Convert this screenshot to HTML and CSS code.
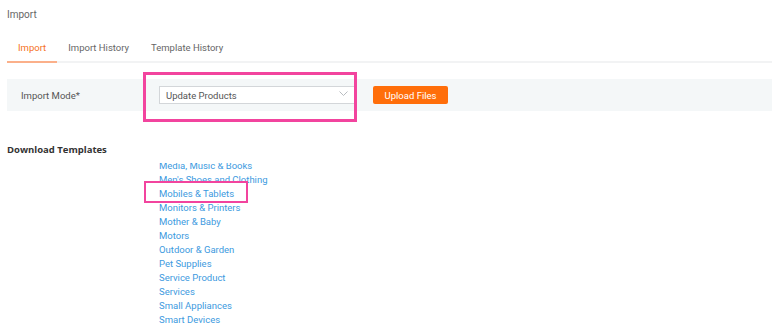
FILE: index.html
```html
<!DOCTYPE html>
<html>
<head>
<meta charset="utf-8">
<link rel="stylesheet" href="styles.css">
</head>
<body>
<div class="page">
  <div class="title">Import</div>
  <div class="tabs">
    <div class="tab active">Import</div>
    <div class="tab">Import History</div>
    <div class="tab">Template History</div>
  </div>
  <div class="mode-row">
    <div class="label">Import Mode*</div>
    <div class="select-wrap">
      <div class="select">
        <span>Update Products</span>
        <svg class="chev" width="9" height="5" viewBox="0 0 9 5"><path d="M0.5 0.5 L4.5 4.5 L8.5 0.5" fill="none" stroke="#b8bcc0" stroke-width="1"/></svg>
      </div>
      <div class="mark mark-select"></div>
    </div>
    <button class="upload">Upload Files</button>
  </div>
  <div class="section-title">Download Templates</div>
  <div class="list-view">
    <ul class="list">
      <li>Media, Music &amp; Books</li>
      <li>Men's Shoes and Clothing</li>
      <li class="marked">Mobiles &amp; Tablets<span class="mark mark-item"></span></li>
      <li>Monitors &amp; Printers</li>
      <li>Mother &amp; Baby</li>
      <li>Motors</li>
      <li>Outdoor &amp; Garden</li>
      <li>Pet Supplies</li>
      <li>Service Product</li>
      <li>Services</li>
      <li>Small Appliances</li>
      <li>Smart Devices</li>
    </ul>
  </div>
</div>
</body>
</html>
```
FILE: styles.css
```css
html, body {
  margin: 0;
  padding: 0;
  background: #fff;
}
body {
  font-family: Roboto, "Liberation Sans", Arial, sans-serif;
  font-size: 9.5px;
  color: #666;
  overflow: hidden;
}
.page {
  padding: 0 3px 0 7px;
}
.title {
  line-height: 29px;
  height: 28px;
  color: #666;
  font-size: 10px;
}
.tabs {
  display: flex;
  border-bottom: 2px solid #f2f3f4;
}
.tab {
  padding: 13px 11px 6px;
  line-height: 14px;
  color: #666;
  margin-bottom: -2px;
  border-bottom: 2px solid transparent;
}
.tab.active {
  color: #f57224;
  border-bottom-color: #fbb08a;
}
.mode-row {
  margin-top: 16px;
  height: 32px;
  background: #f4f7f8;
  display: flex;
  align-items: center;
}
.label {
  width: 138px;
  padding-left: 14px;
  color: #555;
}
.select-wrap {
  position: relative;
}
.select {
  width: 197px;
  height: 18px;
  box-sizing: border-box;
  border: 1px solid #d3d6d9;
  background: #fff;
  display: flex;
  align-items: center;
  justify-content: space-between;
  padding: 0 7px 0 6px;
  color: #555;
}
.chev {
  display: block;
  margin-top: -3px;
}
.mark {
  position: absolute;
  border: 3px solid #f2449e;
  box-sizing: border-box;
  pointer-events: none;
}
.mark-select {
  left: -16px;
  top: -14px;
  width: 214px;
  height: 50px;
}
.upload {
  margin-left: 17px;
  width: 75px;
  height: 18px;
  border: none;
  border-radius: 2px;
  background: #ff6e0a;
  color: #fff;
  font-family: inherit;
  font-size: 9.5px;
  padding: 0;
}
.section-title {
  margin-top: 32px;
  line-height: 14px;
  font-family: "Open Sans", Roboto, sans-serif;
  font-size: 9.5px;
  font-weight: bold;
  color: #333;
}
.list-view {
  margin-top: 6px;
  overflow: hidden;
  height: 172px;
  padding-left: 152px;
}
.list {
  list-style: none;
  margin: -4px 0 0;
  padding: 0;
}
.list li {
  line-height: 14px;
  color: #3d9ae0;
}
.marked {
  position: relative;
  display: inline-block;
}
.mark-item {
  left: -15px;
  top: -6px;
  width: 104px;
  height: 22px;
  border-width: 2.5px;
}
```
